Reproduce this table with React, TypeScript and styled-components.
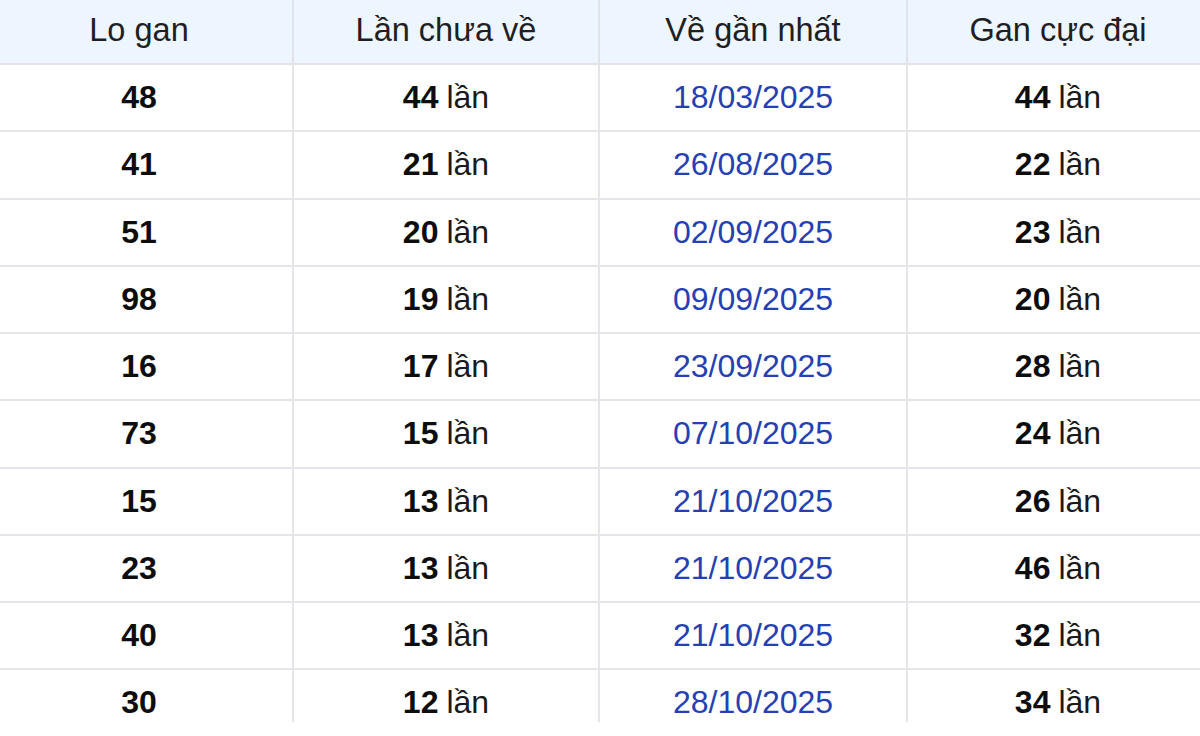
import React from "react";
import styled, { createGlobalStyle } from "styled-components";

const Global = createGlobalStyle`
  html, body { margin: 0; padding: 0; background: #ffffff; }
  body { font-family: "Liberation Sans", Arial, sans-serif; }
`;

const Viewport = styled.div`
  width: 1200px;
  height: 722px;
  overflow: hidden;
  background: #ffffff;
`;

const Table = styled.div`
  width: 1222px;
  margin-left: -14px;
  display: grid;
  grid-template-columns: 306px 306px 308px 302px;
`;

const HeadCell = styled.div<{ $first?: boolean }>`
  box-sizing: border-box;
  height: 65px;
  display: flex;
  align-items: center;
  justify-content: center;
  padding-bottom: 3px;
  background: #edf5fe;
  border-bottom: 2px solid #e1e3e8;
  border-left: ${(p) => (p.$first ? "none" : "2px solid #e1e3e8")};
  font-size: 32.5px;
  color: #1f1f1f;
  white-space: nowrap;
`;

const Cell = styled.div<{ $first?: boolean }>`
  box-sizing: border-box;
  height: 67.25px;
  display: flex;
  align-items: center;
  justify-content: center;
  border-bottom: 2px solid #e3e5ea;
  border-left: ${(p) => (p.$first ? "none" : "2px solid #e3e5ea")};
  font-size: 32px;
  color: #111111;
  white-space: nowrap;
`;

const Num = styled.b`
  font-weight: 700;
  color: #0d0d0d;
`;

const Times = styled.span`
  font-weight: 400;
  color: #1a1a1a;
  margin-left: 8px;
`;

const DateText = styled.span`
  color: #2440b3;
`;

const rows: [string, string, string, string][] = [
  ["48", "44", "18/03/2025", "44"],
  ["41", "21", "26/08/2025", "22"],
  ["51", "20", "02/09/2025", "23"],
  ["98", "19", "09/09/2025", "20"],
  ["16", "17", "23/09/2025", "28"],
  ["73", "15", "07/10/2025", "24"],
  ["15", "13", "21/10/2025", "26"],
  ["23", "13", "21/10/2025", "46"],
  ["40", "13", "21/10/2025", "32"],
  ["30", "12", "28/10/2025", "34"],
];

const headers = ["Lo gan", "Lần chưa về", "Về gần nhất", "Gan cực đại"];

export default function App() {
  return (
    <>
      <Global />
      <Viewport>
        <Table>
          {headers.map((h, i) => (
            <HeadCell key={h} $first={i === 0}>
              {h}
            </HeadCell>
          ))}
          {rows.map((r, idx) => (
            <React.Fragment key={idx}>
              <Cell $first>
                <Num>{r[0]}</Num>
              </Cell>
              <Cell>
                <Num>{r[1]}</Num>
                <Times>lần</Times>
              </Cell>
              <Cell>
                <DateText>{r[2]}</DateText>
              </Cell>
              <Cell>
                <Num>{r[3]}</Num>
                <Times>lần</Times>
              </Cell>
            </React.Fragment>
          ))}
        </Table>
      </Viewport>
    </>
  );
}
